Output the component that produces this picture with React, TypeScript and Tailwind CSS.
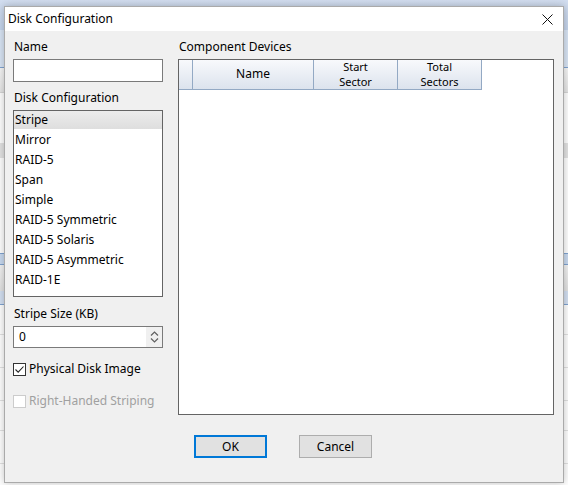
const FONT = { fontFamily: '"Noto Sans", "Open Sans", sans-serif' }

const RAID_TYPES = [
  'Stripe',
  'Mirror',
  'RAID-5',
  'Span',
  'Simple',
  'RAID-5 Symmetric',
  'RAID-5 Solaris',
  'RAID-5 Asymmetric',
  'RAID-1E',
]

const COLUMNS = [
  { w: 'w-[121px]', lines: ['Name'] },
  { w: 'w-[84px]', lines: ['Start', 'Sector'] },
  { w: 'w-[84px]', lines: ['Total', 'Sectors'] },
]

function Backdrop() {
  return (
    <div className="flex h-full w-full flex-col bg-white">
      <div className="h-[30px] bg-gradient-to-b from-[#d3def0] to-[#c4d4ec]" />
      <div className="h-[38px] border-b border-[#7fa3d0] bg-[#d9e5f5]" />
      <div className="h-[25px] border-b border-[#d6d6d6] bg-gradient-to-b from-[#f7f7f7] to-[#e6e6e6]" />
      <div className="h-[50px] bg-white" />
      <div className="h-[15px] bg-[#e3e3e3]" />
      <div className="h-[95px] bg-white" />
      <div className="h-[12px] border-y border-[#7fa3d0] bg-[#c9daf0]" />
      <div className="h-[26px] bg-gradient-to-b from-[#f3f3f3] to-[#e2e2e2]" />
      <div className="h-[14px] border-b border-[#7fa3d0] bg-[#d3e0f2]" />
      <div className="flex flex-1 flex-col">
        <div className="h-[30px] border-b border-[#e2e2e2]" />
        <div className="h-[33px] border-b border-[#e2e2e2]" />
        <div className="h-[33px] border-b border-[#e2e2e2]" />
        <div className="h-[30px] border-b border-[#e2e2e2]" />
        <div className="h-[33px] border-b border-[#e2e2e2]" />
      </div>
    </div>
  )
}

function SpinBox() {
  return (
    <div className="mt-[4px] flex h-[22px] w-[150px] border border-[#7a7a7a] bg-white">
      <span className="flex-1 pl-[5px] text-[12px] leading-[20px] text-black">0</span>
      <div className="flex w-[16px] flex-col items-center justify-center gap-[2px] bg-[#f0f0f0]">
        <svg width="9" height="5" viewBox="0 0 9 5" fill="none">
          <path d="M1 4.5L4.5 1L8 4.5" stroke="#606060" strokeWidth="1.2" />
        </svg>
        <svg width="9" height="5" viewBox="0 0 9 5" fill="none">
          <path d="M1 0.5L4.5 4L8 0.5" stroke="#606060" strokeWidth="1.2" />
        </svg>
      </div>
    </div>
  )
}

function CheckRow({ label, checked, disabled }: { label: string; checked?: boolean; disabled?: boolean }) {
  return (
    <div className="flex h-[16px] items-center gap-[3px]">
      <div
        className={
          disabled
            ? 'flex h-[13px] w-[13px] items-center justify-center border border-[#cccccc] bg-white'
            : 'flex h-[13px] w-[13px] items-center justify-center border border-[#333333] bg-white'
        }
      >
        {checked && (
          <svg width="11" height="11" viewBox="0 0 11 11" fill="none">
            <path d="M1.5 5.5L4.2 8.2L9.5 2.5" stroke="#222" strokeWidth="1.1" />
          </svg>
        )}
      </div>
      <span className={disabled ? 'text-[12px] text-[#a0a0a0]' : 'text-[12px] text-black'}>{label}</span>
    </div>
  )
}

function DevicesList() {
  return (
    <div className="mt-[4px] h-[356px] w-[376px] border border-[#646464] bg-white">
      <div className="flex h-[30px]">
        <div className="w-[14px] border-r border-b border-[#93a9c4] bg-gradient-to-b from-[#f8f9fc] to-[#dce3ed]" />
        {COLUMNS.map((c) => (
          <div
            key={c.lines[0]}
            className={`${c.w} flex flex-col items-center justify-center border-r border-b border-[#93a9c4] bg-gradient-to-b from-[#f8f9fc] to-[#dce3ed] text-[11px] leading-[14.5px] text-black`}
          >
            {c.lines.map((line) => (
              <span key={line} className={c.lines.length === 1 ? 'text-[12px]' : ''}>
                {line}
              </span>
            ))}
          </div>
        ))}
      </div>
    </div>
  )
}

function DiskConfigDialog() {
  return (
    <div className="flex h-full w-full flex-col border border-[#aaaaaa] bg-[#f0f0f0] shadow-[0_0_8px_rgba(0,0,0,0.25)]">
      <div className="flex h-[24px] items-center justify-between bg-white pl-[3px] pr-[10px]">
        <span className="text-[12px] text-black">Disk Configuration</span>
        <svg width="11" height="11" viewBox="0 0 11 11" fill="none">
          <path d="M0.5 0.5L10.5 10.5M10.5 0.5L0.5 10.5" stroke="#111" strokeWidth="1" />
        </svg>
      </div>

      <div className="flex items-start gap-[15px] pl-[8px] pt-[8px]">
        <div className="flex w-[150px] flex-col text-[12px] leading-[16px] text-black">
          <span className="pl-[1px]">Name</span>
          <div className="mt-[4px] h-[23px] w-[150px] border border-[#7a7a7a] bg-white" />
          <span className="mt-[8px] pl-[1px]">Disk Configuration</span>
          <div className="mt-[4px] flex h-[187px] w-[150px] flex-col border border-[#646464] bg-white">
            {RAID_TYPES.map((t, i) => (
              <div
                key={t}
                className={
                  i === 0
                    ? 'flex h-[20px] items-start bg-gradient-to-b from-[#ececec] from-0% via-[#dedede] via-90% to-white to-90% pl-[1px] pt-[1px]'
                    : 'flex h-[20px] items-start pl-[1px] pt-[1px]'
                }
              >
                {t}
              </div>
            ))}
          </div>
          <span className="mt-[9px] pl-[1px]">Stripe Size (KB)</span>
          <SpinBox />
          <div className="mt-[13px]">
            <CheckRow label="Physical Disk Image" checked />
          </div>
          <div className="mt-[16px]">
            <CheckRow label="Right-Handed Striping" disabled />
          </div>
        </div>

        <div className="flex flex-col text-[12px] leading-[16px] text-black">
          <span className="pl-[1px]">Component Devices</span>
          <DevicesList />
        </div>
      </div>

      <div className="mt-[20px] flex justify-center gap-[32px] pr-[2px]">
        <button className="h-[23px] w-[73px] border-2 border-[#0078d7] bg-[#e1e1e1] text-[12px] text-black">OK</button>
        <button className="h-[23px] w-[73px] border border-[#adadad] bg-[#e1e1e1] text-[12px] text-black">Cancel</button>
      </div>
    </div>
  )
}

export default function App() {
  return (
    <div className="relative h-[485px] w-[568px] overflow-hidden" style={FONT}>
      <Backdrop />
      <div className="absolute left-[4px] top-[6px] h-[477px] w-[560px]">
        <DiskConfigDialog />
      </div>
    </div>
  )
}
